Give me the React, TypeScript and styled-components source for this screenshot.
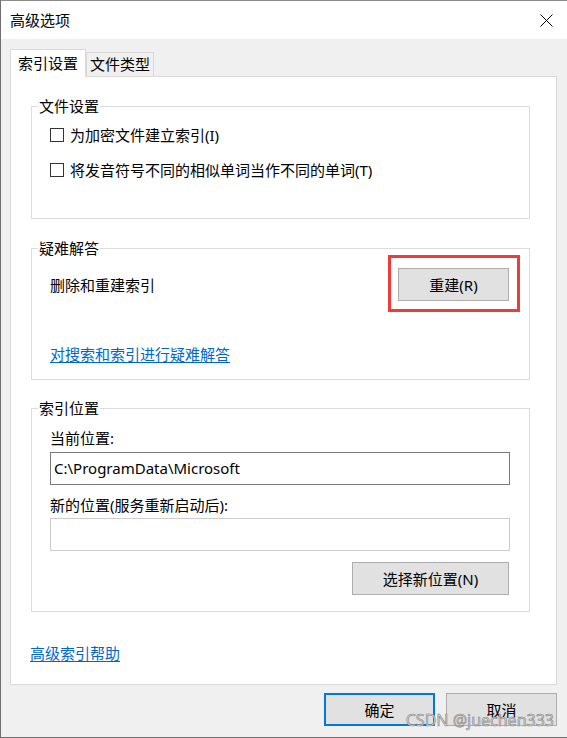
import React from "react";
import styled, { createGlobalStyle } from "styled-components";

const GlobalStyle = createGlobalStyle`
  html, body { margin: 0; padding: 0; background: #ffffff; }
  body {
    font-family: "Noto Sans", "Noto Sans CJK SC", sans-serif;
    font-size: 15px;
    color: #000000;
  }
  * { box-sizing: border-box; }
`;

const Window = styled.div`
  position: relative;
  width: 567px;
  height: 738px;
  background: #f0f0f0;
  border-top: 1px solid #8a8a8a;
  border-left: 1px solid #6f6f6f;
  border-bottom: 1px solid #6f6f6f;
  overflow: hidden;
  display: flex;
  flex-direction: column;
`;

const TitleBar = styled.div`
  height: 38px;
  background: #ffffff;
  display: flex;
  align-items: center;
  justify-content: space-between;
  padding: 0 14px 0 9px;
`;

const Title = styled.span`
  font-size: 15px;
  line-height: 20px;
`;

const CloseIcon = styled.svg`
  width: 13px;
  height: 13px;
  display: block;
`;

const Body = styled.div`
  padding: 10px 10px 0 9px;
  display: flex;
  flex-direction: column;
`;

const TabStrip = styled.div`
  display: flex;
  align-items: flex-end;
  height: 27px;
`;

const Tab = styled.div<{ $active?: boolean }>`
  position: relative;
  z-index: ${(p) => (p.$active ? 1 : 0)};
  height: ${(p) => (p.$active ? "28px" : "24px")};
  margin-bottom: ${(p) => (p.$active ? "-1px" : "0")};
  padding: ${(p) => (p.$active ? "3px 7px 0 7px" : "1px 3px 0 3px")};
  background: ${(p) => (p.$active ? "#ffffff" : "#f0f0f0")};
  border: 1px solid #d9d9d9;
  border-bottom: none;
  line-height: 20px;
  font-size: 15px;
  white-space: nowrap;
`;

const Panel = styled.div`
  width: 547px;
  height: 609px;
  background: #ffffff;
  border: 1px solid #d9d9d9;
  padding: 19px 26px 0 20px;
  display: flex;
  flex-direction: column;
`;

const Group = styled.fieldset<{ $gap?: number }>`
  margin: ${(p) => p.$gap ?? 0}px 0 0 0;
  padding: 0;
  min-width: 0;
  border: 1px solid #dcdcdc;
`;

const Legend = styled.legend`
  margin-left: 6px;
  padding: 0 1px;
  line-height: 20px;
  font-size: 15px;
`;

const GroupBody = styled.div<{ $pad: string }>`
  padding: ${(p) => p.$pad};
  display: flex;
  flex-direction: column;
`;

const CheckRow = styled.label`
  display: flex;
  align-items: center;
  gap: 6px;
  height: 20px;
  line-height: 20px;
  & + & { margin-top: 15px; }
`;

const CheckBox = styled.span`
  display: block;
  width: 14px;
  min-width: 14px;
  height: 14px;
  border: 1px solid #333333;
  background: #ffffff;
  flex: none;
`;

const ActionRow = styled.div`
  display: flex;
  align-items: center;
  justify-content: space-between;
  height: 33px;
`;

const Text = styled.span<{ $mt?: number }>`
  line-height: 20px;
  margin-top: ${(p) => p.$mt ?? 0}px;
`;

const Highlight = styled.span`
  position: relative;
  display: inline-flex;
  &::after {
    content: "";
    position: absolute;
    top: -13px;
    bottom: -11px;
    left: -10px;
    right: -11px;
    border: 3px solid #f23a3a;
    pointer-events: none;
  }
`;

const Button = styled.button<{ $w: number; $primary?: boolean }>`
  width: ${(p) => p.$w}px;
  height: 33px;
  background: #e1e1e1;
  border: ${(p) => (p.$primary ? "2px solid #0078d7" : "1px solid #adadad")};
  font-family: inherit;
  font-size: 15px;
  line-height: 20px;
  color: #000000;
  padding: 0;
  flex: none;
`;

const Link = styled.a<{ $mt: number; $ml?: number }>`
  align-self: flex-start;
  color: #0066cc;
  text-decoration: underline;
  text-underline-offset: 2px;
  line-height: 20px;
  margin-top: ${(p) => p.$mt}px;
  margin-left: ${(p) => p.$ml ?? 0}px;
  cursor: pointer;
`;

const Field = styled.div<{ $disabled?: boolean; $mt: number }>`
  height: 33px;
  width: 460px;
  margin-top: ${(p) => p.$mt}px;
  border: 1px solid ${(p) => (p.$disabled ? "#cccccc" : "#7a7a7a")};
  background: #ffffff;
  padding: 0 3px 2px 3px;
  display: flex;
  align-items: center;
  line-height: 20px;
`;

const RightRow = styled.div`
  display: flex;
  justify-content: flex-end;
  margin-top: 11px;
`;

const Footer = styled.div`
  display: flex;
  justify-content: flex-end;
  gap: 11px;
  margin-top: 8px;
`;

const Watermark = styled.div`
  position: absolute;
  right: 13px;
  bottom: 7px;
  font-family: "Noto Sans", sans-serif;
  font-size: 16px;
  line-height: 20px;
  color: #dadada;
  -webkit-text-stroke: 0.6px #858585;
  pointer-events: none;
`;

export default function App() {
  return (
    <>
      <GlobalStyle />
      <Window>
        <TitleBar>
          <Title>高级选项</Title>
          <CloseIcon viewBox="0 0 13 13">
            <path d="M0.5 0.5 L12.5 12.5 M12.5 0.5 L0.5 12.5" stroke="#000" strokeWidth="1" fill="none" />
          </CloseIcon>
        </TitleBar>
        <Body>
          <TabStrip>
            <Tab $active>索引设置</Tab>
            <Tab>文件类型</Tab>
          </TabStrip>
          <Panel>
            <Group>
              <Legend>文件设置</Legend>
              <GroupBody $pad="9px 18px 38px 18px">
                <CheckRow>
                  <CheckBox />
                  为加密文件建立索引(I)
                </CheckRow>
                <CheckRow>
                  <CheckBox />
                  将发音符号不同的相似单词当作不同的单词(T)
                </CheckRow>
              </GroupBody>
            </Group>
            <Group $gap={19}>
              <Legend>疑难解答</Legend>
              <GroupBody $pad="10px 20px 15px 18px">
                <ActionRow>
                  <Text>删除和重建索引</Text>
                  <Highlight>
                    <Button $w={111}>重建(R)</Button>
                  </Highlight>
                </ActionRow>
                <Link $mt={43}>对搜索和索引进行疑难解答</Link>
              </GroupBody>
            </Group>
            <Group $gap={18}>
              <Legend>索引位置</Legend>
              <GroupBody $pad="10px 20px 16px 18px">
                <Text>当前位置:</Text>
                <Field $mt={4}>C:\ProgramData\Microsoft</Field>
                <Text $mt={10}>新的位置(服务重新启动后):</Text>
                <Field $mt={3} $disabled />
                <RightRow>
                  <Button $w={157}>选择新位置(N)</Button>
                </RightRow>
              </GroupBody>
            </Group>
            <Link $mt={31} $ml={-1}>高级索引帮助</Link>
          </Panel>
          <Footer>
            <Button $w={111} $primary>确定</Button>
            <Button $w={111}>取消</Button>
          </Footer>
        </Body>
        <Watermark>CSDN @juechen333</Watermark>
      </Window>
    </>
  );
}
